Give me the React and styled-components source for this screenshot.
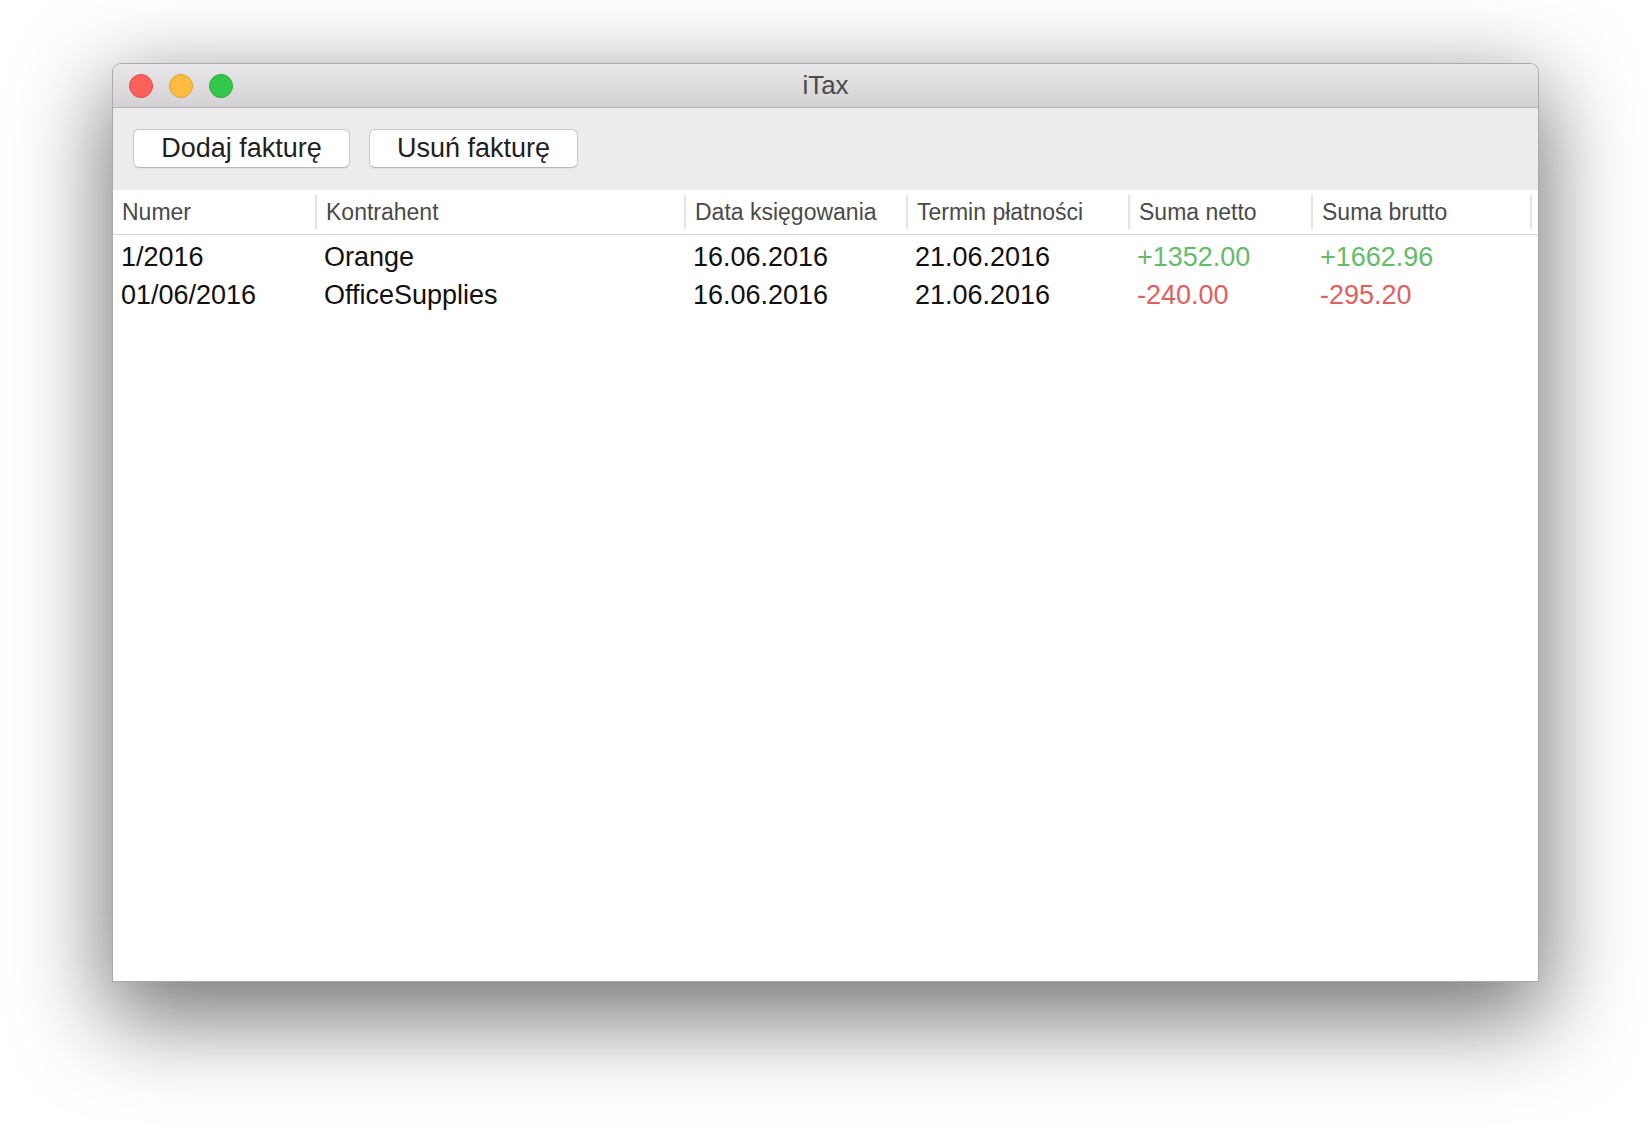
import React from 'react';
import styled, { createGlobalStyle } from 'styled-components';

const GlobalStyle = createGlobalStyle`
  html, body {
    margin: 0;
    padding: 0;
    background: #ffffff;
  }
  body {
    font-family: "Liberation Sans", Arial, sans-serif;
    -webkit-font-smoothing: antialiased;
  }
`;

const Page = styled.div`
  width: 1650px;
  height: 1142px;
  padding: 63px 0 0 112px;
  box-sizing: border-box;
  overflow: hidden;
`;

const Window = styled.div`
  width: 1427px;
  height: 919px;
  display: flex;
  flex-direction: column;
  border: 1px solid rgba(0, 0, 0, 0.28);
  border-radius: 9px 9px 0 0;
  box-sizing: border-box;
  overflow: hidden;
  background: #ececec;
  box-shadow: 0 30px 90px 6px rgba(0, 0, 0, 0.55);
`;

const TitleBar = styled.div`
  height: 44px;
  flex: none;
  display: flex;
  align-items: center;
  position: relative;
  background: linear-gradient(#e9e7e9, #d3d1d3);
  border-bottom: 1px solid #b3b1b3;
  box-sizing: border-box;
`;

const Lights = styled.div`
  display: flex;
  gap: 16px;
  padding-left: 16px;
`;

const Light = styled.span`
  width: 24px;
  height: 24px;
  border-radius: 50%;
  box-sizing: border-box;
  background: ${(p) => p.$fill};
  border: 1px solid ${(p) => p.$edge};
`;

const Title = styled.div`
  position: absolute;
  left: 0;
  right: 0;
  text-align: center;
  font-size: 26px;
  color: #4b4b4b;
  pointer-events: none;
`;

const Toolbar = styled.div`
  height: 82px;
  flex: none;
  display: flex;
  align-items: flex-start;
  gap: 19px;
  padding: 21px 0 0 20px;
  box-sizing: border-box;
  background: #ececec;
`;

const Button = styled.button`
  height: 39px;
  width: ${(p) => p.$width}px;
  padding: 0;
  background: #ffffff;
  border: 1px solid #c9c9c9;
  border-bottom-color: #b8b8b8;
  border-radius: 6px;
  font-family: "Liberation Sans", Arial, sans-serif;
  font-size: 27px;
  color: #1f1f1f;
  box-shadow: 0 1px 1px rgba(0, 0, 0, 0.04);
`;

const Table = styled.div`
  flex: 1;
  background: #ffffff;
  display: flex;
  flex-direction: column;
`;

const cols = '203px 369px 222px 222px 183px 219px 1fr';

const HeaderRow = styled.div`
  display: grid;
  grid-template-columns: ${cols};
  height: 45px;
  border-bottom: 1px solid #d6d6d6;
  box-sizing: border-box;
`;

const HeaderCell = styled.div`
  position: relative;
  display: flex;
  align-items: center;
  padding-left: ${(p) => (p.$first ? 9 : 10)}px;
  font-size: 23px;
  color: #4a4a4a;
  white-space: nowrap;

  &::after {
    content: '';
    display: ${(p) => (p.$last ? 'none' : 'block')};
    position: absolute;
    right: -1px;
    top: 5px;
    bottom: 5px;
    width: 2px;
    background: #e4e4e4;
  }
`;

const Body = styled.div`
  padding-top: 3px;
`;

const Row = styled.div`
  display: grid;
  grid-template-columns: ${cols};
  height: 38px;
  align-items: center;
`;

const Cell = styled.div`
  padding-left: 8px;
  font-size: 27px;
  white-space: nowrap;
  color: ${(p) => (p.$tone === 'plus' ? '#66bb6a' : p.$tone === 'minus' ? '#e0605e' : '#111111')};
`;

const columns = [
  'Numer',
  'Kontrahent',
  'Data księgowania',
  'Termin płatności',
  'Suma netto',
  'Suma brutto',
];

const invoices = [
  {
    numer: '1/2016',
    kontrahent: 'Orange',
    data: '16.06.2016',
    termin: '21.06.2016',
    netto: '+1352.00',
    brutto: '+1662.96',
  },
  {
    numer: '01/06/2016',
    kontrahent: 'OfficeSupplies',
    data: '16.06.2016',
    termin: '21.06.2016',
    netto: '-240.00',
    brutto: '-295.20',
  },
];

const toneOf = (v) => (v.startsWith('-') ? 'minus' : 'plus');

const App = () => {
  return (
    <Page>
      <GlobalStyle />
      <Window>
        <TitleBar>
          <Lights>
            <Light $fill="#fc605b" $edge="#de4a45" />
            <Light $fill="#fdbc40" $edge="#de9f34" />
            <Light $fill="#34c84a" $edge="#27aa35" />
          </Lights>
          <Title>iTax</Title>
        </TitleBar>
        <Toolbar>
          <Button $width={217}>Dodaj fakturę</Button>
          <Button $width={209}>Usuń fakturę</Button>
        </Toolbar>
        <Table>
          <HeaderRow>
            {columns.map((c, i) => (
              <HeaderCell key={c} $first={i === 0}>
                {c}
              </HeaderCell>
            ))}
            <HeaderCell $last />
          </HeaderRow>
          <Body>
            {invoices.map((inv) => (
              <Row key={inv.numer}>
                <Cell>{inv.numer}</Cell>
                <Cell>{inv.kontrahent}</Cell>
                <Cell>{inv.data}</Cell>
                <Cell>{inv.termin}</Cell>
                <Cell $tone={toneOf(inv.netto)}>{inv.netto}</Cell>
                <Cell $tone={toneOf(inv.brutto)}>{inv.brutto}</Cell>
                <Cell />
              </Row>
            ))}
          </Body>
        </Table>
      </Window>
    </Page>
  );
};

export default App;
